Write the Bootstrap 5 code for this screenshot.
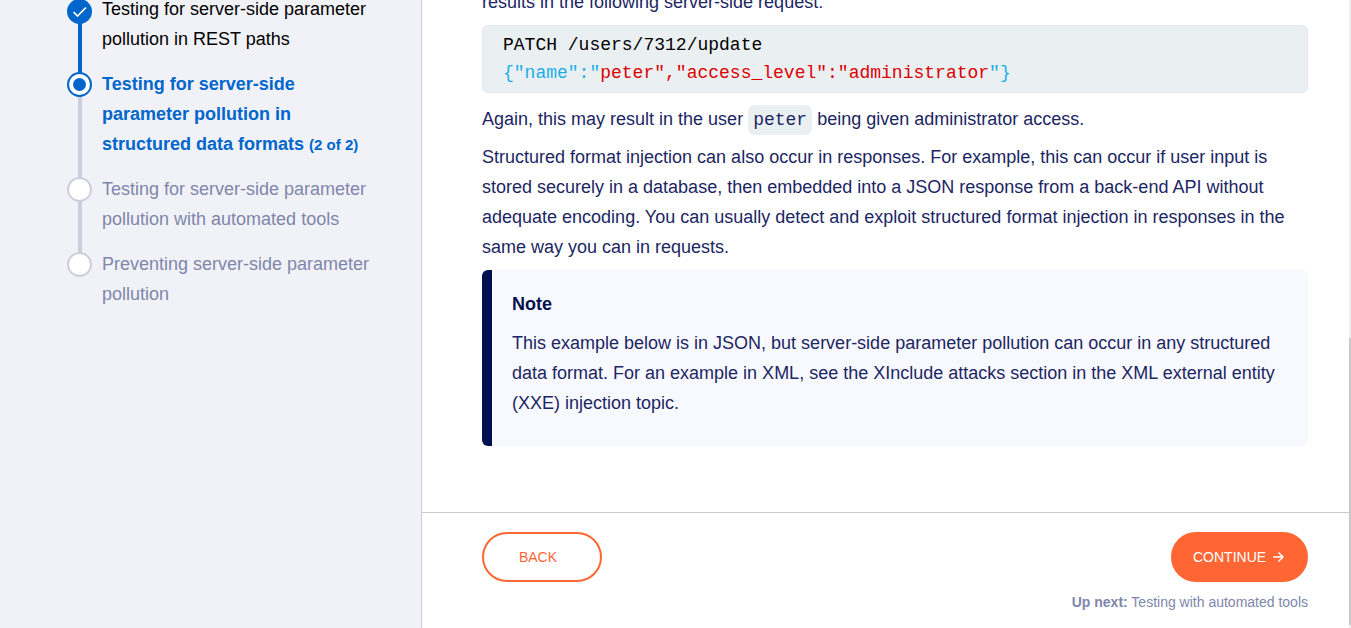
<!DOCTYPE html>
<html lang="en">
<head>
<meta charset="utf-8">
<meta name="viewport" content="width=device-width, initial-scale=1">
<title>Server-side parameter pollution</title>
<link href="https://cdn.jsdelivr.net/npm/bootstrap@5.3.0/dist/css/bootstrap.min.css" rel="stylesheet">
<style>
  body { font-family: "Liberation Sans", Arial, sans-serif; font-size: 18px; line-height: 30px; color: #1c2663; }
  .sidebar { width: 422px; background: #f1f2f7; border-right: 1px solid #c8cacc; padding: 0 48px 0 67px; }
  /* Both panes are shown part-way through their content */
  .steps { margin-top: -6px; }
  .step { display: grid; grid-template-columns: 25px 1fr; column-gap: 10px; padding-bottom: 15px; position: relative; color: #8086ab; }
  .step a { color: inherit; text-decoration: none; }
  .step svg { margin-top: 3px; position: relative; z-index: 1; }
  .step::before { content: ""; position: absolute; left: 11px; top: 15px; bottom: -15px; width: 4px; background: #cdcedd; }
  .step:last-child::before { display: none; }
  .step-done { color: #000; }
  .step-done svg { margin-top: 5px; }
  .step-done::before { background: #0066cc; }
  .step-current { color: #0066cc; font-weight: bold; }
  .step-count { font-size: 15px; line-height: 1; }
  .lesson { padding: 0 41px 0 60px; }
  .lesson-text { margin-top: -13px; }
  .lesson p { margin-bottom: 8px; }
  .code-block { font: 18px/28px "Liberation Mono", "Courier New", monospace; background: #eaeff2; border: 1px solid #e3e8ea; border-radius: 6px; color: #000; padding: 5px 20px; margin-bottom: 11px; }
  .code-cyan { color: #1aaee8; }
  .code-red { color: #dc0000; }
  .code-word { font: 18px/28px "Liberation Mono", "Courier New", monospace; color: inherit; background: #eaeff2; border-radius: 6px; padding: 5px; }
  .note { background: #f8f9fe; border-left: 10px solid #00114f; border-radius: 6px; padding: 19px 20px 28px; }
  .note h2 { font-size: 18px; line-height: 30px; font-weight: bold; color: #00114f; margin-bottom: 9px; }
  .pager { border-top: 1px solid #c8cccc; padding: 19px 41px 16px 60px; }
  .btn-pill { height: 50px; border: 2px solid #ff6633; border-radius: 25px; font-size: 14px; padding: 0 20px; }
  .btn-back, .btn-back:hover { width: 120px; color: #ff6633; padding-right: 28px; }
  .btn-next, .btn-next:hover { background: #ff6633; color: #fff; width: 137px; }
  .btn-next svg { margin-left: 7px; }
  .up-next { font-size: 14px; line-height: 20px; margin-top: 10px; color: #8086ab; }
  .up-next a { color: inherit; text-decoration: none; }
  .scroll-track { width: 2px; background: #efefef; padding-bottom: 3px; }
  .scroll-thumb { height: 46%; background: #c8c8c8; }
</style>
</head>
<body>
<div class="d-flex vh-100 overflow-hidden">
  <nav class="sidebar flex-shrink-0 overflow-hidden" aria-label="Lesson progress">
    <ol class="steps list-unstyled mb-0">
      <li class="step step-done">
        <svg width="25" height="25" viewBox="0 0 25 25" aria-hidden="true"><circle cx="12.5" cy="12.5" r="12.5" fill="#0066cc"/><path d="M6.500 13l4 4 8.500-8.500" fill="none" stroke="#fff" stroke-width="1.7"/></svg>
        <a href="#rest">Testing for server-side parameter pollution in REST paths</a>
      </li>
      <li class="step step-current">
        <svg width="25" height="25" viewBox="0 0 25 25" aria-hidden="true"><circle cx="12.5" cy="12.5" r="11.5" fill="#fff" stroke="#0066cc" stroke-width="2"/><circle cx="12.5" cy="12.5" r="6.5" fill="#0066cc"/></svg>
        <a href="#structured" aria-current="step">Testing for server-side parameter pollution in structured data formats <span class="step-count">(2 of 2)</span></a>
      </li>
      <li class="step">
        <svg width="25" height="25" viewBox="0 0 25 25" aria-hidden="true"><circle cx="12.5" cy="12.5" r="11.5" fill="#fff" stroke="#cdcedd" stroke-width="2"/></svg>
        <a href="#tools">Testing for server-side parameter pollution with automated tools</a>
      </li>
      <li class="step">
        <svg width="25" height="25" viewBox="0 0 25 25" aria-hidden="true"><circle cx="12.5" cy="12.5" r="11.5" fill="#fff" stroke="#cdcedd" stroke-width="2"/></svg>
        <a href="#preventing">Preventing server-side parameter pollution</a>
      </li>
    </ol>
  </nav>
  <div class="d-flex flex-column flex-grow-1">
    <main class="lesson flex-grow-1 overflow-hidden">
      <div class="lesson-text">
        <p>results in the following server-side request:</p>
        <pre class="code-block">PATCH /users/7312/update
<span class="code-cyan">{"name":"</span><span class="code-red">peter","access_level":"administrator</span><span class="code-cyan">"}</span></pre>
        <p>Again, this may result in the user <code class="code-word">peter</code> being given administrator access.</p>
        <p>Structured format injection can also occur in responses. For example, this can occur if user input is stored securely in a database, then embedded into a JSON response from a back-end API without adequate encoding. You can usually detect and exploit structured format injection in responses in the same way you can in requests.</p>
        <aside class="note">
          <h2>Note</h2>
          <p class="mb-0">This example below is in JSON, but server-side parameter pollution can occur in any structured data format. For an example in XML, see the XInclude attacks section in the XML external entity (XXE) injection topic.</p>
        </aside>
      </div>
    </main>
    <footer class="pager">
      <div class="d-flex justify-content-between">
        <button type="button" class="btn btn-pill btn-back">BACK</button>
        <button type="button" class="btn btn-pill btn-next d-flex align-items-center">CONTINUE
          <svg class="flex-shrink-0" width="11" height="12" viewBox="0 0 11 12" fill="none" stroke="#fff" stroke-width="1.5" aria-hidden="true"><path d="M0 6h10M5.500 1.500L10 6l-4.500 4.500"/></svg>
        </button>
      </div>
      <div class="up-next text-end"><b>Up next:</b> <a href="#tools">Testing with automated tools</a></div>
    </footer>
  </div>
  <div class="scroll-track d-flex flex-column justify-content-end flex-shrink-0" aria-hidden="true"><div class="scroll-thumb"></div></div>
</div>
<script src="https://cdn.jsdelivr.net/npm/bootstrap@5.3.0/dist/js/bootstrap.bundle.min.js"></script>
</body>
</html>
